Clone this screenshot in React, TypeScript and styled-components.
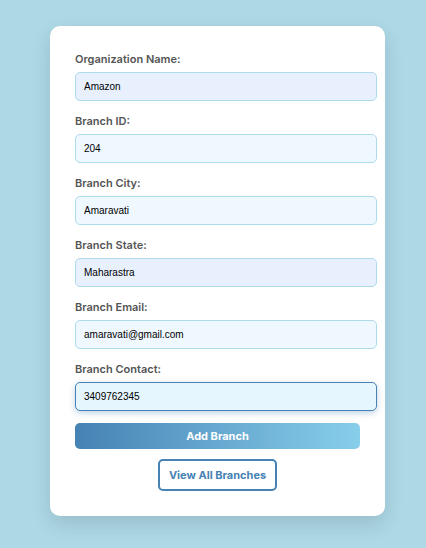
import React from "react";
import styled, { createGlobalStyle } from "styled-components";

const Global = createGlobalStyle`
  html, body { margin: 0; padding: 0; }
  body {
    background: #add8e6;
    font-family: "Inter", "Noto Sans", sans-serif;
  }
  * { box-sizing: content-box; }
`;

const Page = styled.div`
  min-height: 548px;
  display: flex;
  justify-content: center;
  align-items: flex-start;
  padding-top: 26px;
  box-sizing: border-box;
`;

const Card = styled.form`
  width: 285px;
  margin-left: 9px;
  padding: 25px 25px 25px 25px;
  background: #ffffff;
  border-radius: 10px;
  box-shadow: 0 8px 20px rgba(0, 0, 0, 0.12);
`;

const Group = styled.div`
  margin-bottom: 12px;
`;

const Label = styled.label`
  display: block;
  font-family: "Inter", "Noto Sans", sans-serif;
  font-weight: 600;
  font-size: 11px;
  line-height: 16px;
  color: #555555;
  margin-bottom: 5px;
`;

const Input = styled.input<{ $bg: string; $focus?: boolean }>`
  display: block;
  width: 284px;
  padding: 8px 8px;
  margin: 0;
  border: 1px solid ${(p) => (p.$focus ? "#4682b4" : "#aedbea")};
  border-radius: 5px;
  background: ${(p) => p.$bg};
  font-family: "Liberation Sans", Arial, sans-serif;
  font-size: 10px;
  line-height: 11px;
  color: #000;
  outline: none;
  box-shadow: ${(p) => (p.$focus ? "0 2px 6px rgba(70, 130, 180, 0.35)" : "none")};
`;

const Submit = styled.button`
  display: block;
  width: 285px;
  height: 26px;
  margin: 0 0 10px 0;
  padding: 0;
  border: none;
  border-radius: 5px;
  background: linear-gradient(to right, #4682b4, #87ceeb);
  color: #ffffff;
  font-family: "Inter", "Noto Sans", sans-serif;
  font-weight: 700;
  font-size: 11px;
  cursor: pointer;
`;

const Secondary = styled.button`
  display: block;
  margin: 0 auto;
  height: 32px;
  padding: 0 9px;
  border: 2px solid #4682b4;
  border-radius: 5px;
  background: #ffffff;
  color: #4682b4;
  font-family: "Inter", "Noto Sans", sans-serif;
  font-weight: 700;
  font-size: 11px;
  white-space: nowrap;
  box-sizing: border-box;
  cursor: pointer;
`;

const fields = [
  { label: "Organization Name:", value: "Amazon", bg: "#e8f0fe" },
  { label: "Branch ID:", value: "204", bg: "#f0f8ff" },
  { label: "Branch City:", value: "Amaravati", bg: "#f0f8ff" },
  { label: "Branch State:", value: "Maharastra", bg: "#e8f0fe" },
  { label: "Branch Email:", value: "amaravati@gmail.com", bg: "#f0f8ff" },
  { label: "Branch Contact:", value: "3409762345", bg: "#e6f6fe", focus: true },
];

export default function App() {
  return (
    <>
      <Global />
      <Page>
        <Card onSubmit={(e) => e.preventDefault()}>
          {fields.map((f) => (
            <Group key={f.label}>
              <Label>{f.label}</Label>
              <Input defaultValue={f.value} $bg={f.bg} $focus={f.focus} readOnly />
            </Group>
          ))}
          <Submit type="submit">Add Branch</Submit>
          <Secondary type="button">View All Branches</Secondary>
        </Card>
      </Page>
    </>
  );
}
